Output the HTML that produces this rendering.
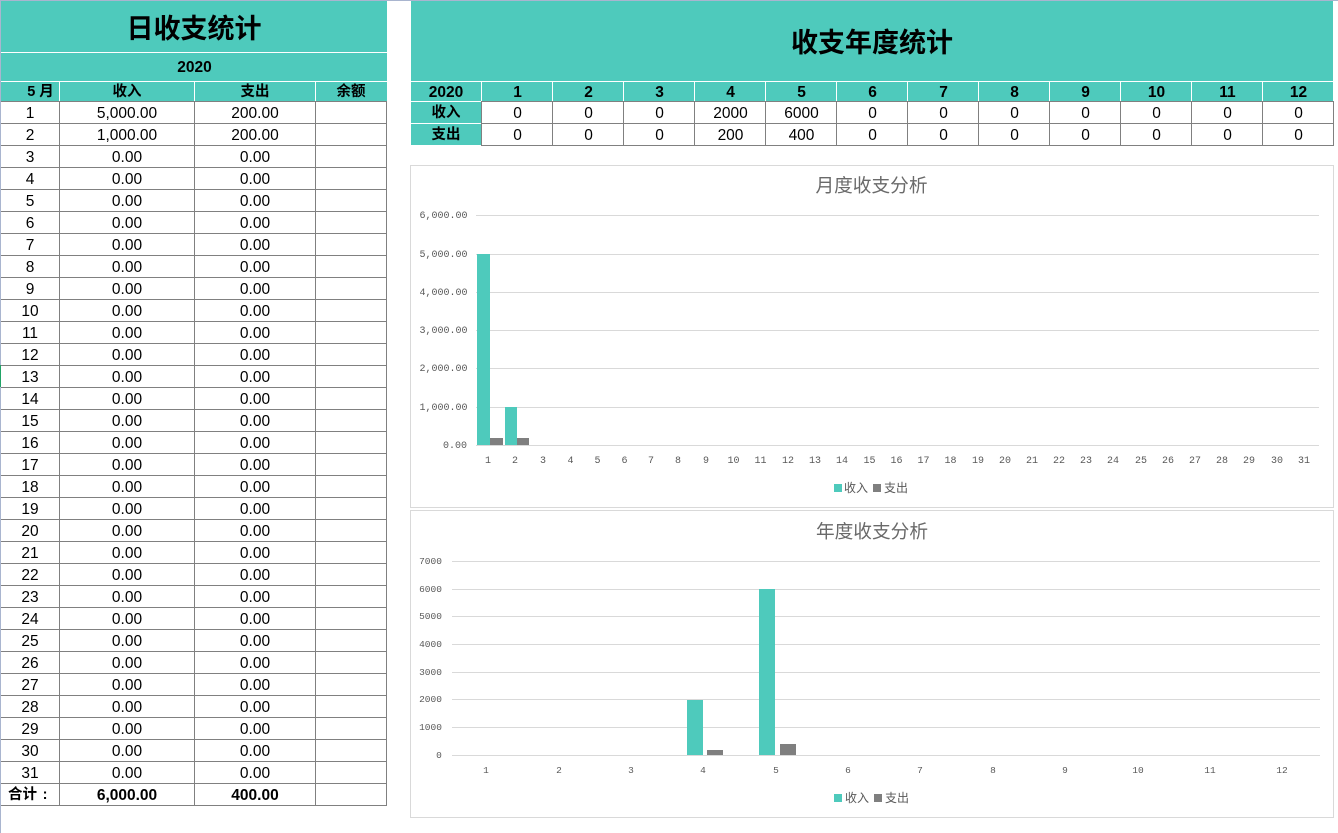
<!DOCTYPE html>
<html lang="zh"><head><meta charset="utf-8"><title>收支统计</title>
<style>
html,body{margin:0;padding:0;background:#fff;width:1338px;height:833px;overflow:hidden}
svg{display:block}
text{font-family:"Liberation Sans","Noto Sans CJK SC",sans-serif;font-size:15.5px;fill:#000;text-anchor:middle}
.cj{font-family:"Liberation Sans","Noto Sans CJK SC",sans-serif;font-size:14.5px}
.b{font-weight:bold}
.ax text{font-family:"Liberation Mono",monospace;font-size:10px;fill:#595959}
.ax2 text{font-size:9.5px}
.lg text{font-family:"Liberation Sans","WenQuanYi Zen Hei","Noto Sans CJK SC",sans-serif;font-size:12px;fill:#595959;text-anchor:start}
.tt{font-family:"Liberation Sans","WenQuanYi Zen Hei","Noto Sans CJK SC",sans-serif;font-size:18.7px;fill:#6a6a6a}
</style></head><body>
<svg width="1338" height="833" viewBox="0 0 1338 833" xmlns="http://www.w3.org/2000/svg" shape-rendering="crispEdges">
<rect width="1338" height="833" fill="#fff"/>
<rect x="0" y="0" width="1338" height="1" fill="#a9b5cf"/>
<rect x="0" y="0" width="1" height="833" fill="#a9b5cf"/>
<rect x="0" y="365" width="1" height="22" fill="#21a366"/>

<!-- left table -->
<rect x="1" y="1" width="386" height="100" fill="#4ecabc"/>
<rect x="1" y="52" width="386" height="1" fill="#fff"/>
<rect x="1" y="81" width="386" height="1" fill="#fff"/>
<rect x="59" y="81" width="1" height="20" fill="#fff"/>
<rect x="194" y="81" width="1" height="20" fill="#fff"/>
<rect x="315" y="81" width="1" height="20" fill="#fff"/>
<g fill="#808080">
<rect x="1" y="101" width="386" height="1"/><rect x="1" y="123" width="386" height="1"/><rect x="1" y="145" width="386" height="1"/><rect x="1" y="167" width="386" height="1"/><rect x="1" y="189" width="386" height="1"/><rect x="1" y="211" width="386" height="1"/><rect x="1" y="233" width="386" height="1"/><rect x="1" y="255" width="386" height="1"/><rect x="1" y="277" width="386" height="1"/><rect x="1" y="299" width="386" height="1"/><rect x="1" y="321" width="386" height="1"/><rect x="1" y="343" width="386" height="1"/><rect x="1" y="365" width="386" height="1"/><rect x="1" y="387" width="386" height="1"/><rect x="1" y="409" width="386" height="1"/><rect x="1" y="431" width="386" height="1"/><rect x="1" y="453" width="386" height="1"/><rect x="1" y="475" width="386" height="1"/><rect x="1" y="497" width="386" height="1"/><rect x="1" y="519" width="386" height="1"/><rect x="1" y="541" width="386" height="1"/><rect x="1" y="563" width="386" height="1"/><rect x="1" y="585" width="386" height="1"/><rect x="1" y="607" width="386" height="1"/><rect x="1" y="629" width="386" height="1"/><rect x="1" y="651" width="386" height="1"/><rect x="1" y="673" width="386" height="1"/><rect x="1" y="695" width="386" height="1"/><rect x="1" y="717" width="386" height="1"/><rect x="1" y="739" width="386" height="1"/><rect x="1" y="761" width="386" height="1"/><rect x="1" y="783" width="386" height="1"/><rect x="1" y="805" width="386" height="1"/>
<rect x="59" y="101" width="1" height="704"/><rect x="194" y="101" width="1" height="704"/><rect x="315" y="101" width="1" height="704"/><rect x="386" y="101" width="1" height="705"/>
</g>
<g shape-rendering="auto">
<text x="194" y="38" class="cj b" style="font-size:27px">日收支统计</text>
<text x="194.500" y="72" class="b">2020</text>
<text class="cj b" y="96"><tspan x="40.500">5 月</tspan><tspan x="127">收入</tspan><tspan x="255">支出</tspan><tspan x="351">余额</tspan></text>
<g transform="translate(0,1)">
<text y="117"><tspan x="30">1</tspan><tspan x="127">5,000.00</tspan><tspan x="255">200.00</tspan></text>
<text y="139"><tspan x="30">2</tspan><tspan x="127">1,000.00</tspan><tspan x="255">200.00</tspan></text>
<text y="161"><tspan x="30">3</tspan><tspan x="127">0.00</tspan><tspan x="255">0.00</tspan></text>
<text y="183"><tspan x="30">4</tspan><tspan x="127">0.00</tspan><tspan x="255">0.00</tspan></text>
<text y="205"><tspan x="30">5</tspan><tspan x="127">0.00</tspan><tspan x="255">0.00</tspan></text>
<text y="227"><tspan x="30">6</tspan><tspan x="127">0.00</tspan><tspan x="255">0.00</tspan></text>
<text y="249"><tspan x="30">7</tspan><tspan x="127">0.00</tspan><tspan x="255">0.00</tspan></text>
<text y="271"><tspan x="30">8</tspan><tspan x="127">0.00</tspan><tspan x="255">0.00</tspan></text>
<text y="293"><tspan x="30">9</tspan><tspan x="127">0.00</tspan><tspan x="255">0.00</tspan></text>
<text y="315"><tspan x="30">10</tspan><tspan x="127">0.00</tspan><tspan x="255">0.00</tspan></text>
<text y="337"><tspan x="30">11</tspan><tspan x="127">0.00</tspan><tspan x="255">0.00</tspan></text>
<text y="359"><tspan x="30">12</tspan><tspan x="127">0.00</tspan><tspan x="255">0.00</tspan></text>
<text y="381"><tspan x="30">13</tspan><tspan x="127">0.00</tspan><tspan x="255">0.00</tspan></text>
<text y="403"><tspan x="30">14</tspan><tspan x="127">0.00</tspan><tspan x="255">0.00</tspan></text>
<text y="425"><tspan x="30">15</tspan><tspan x="127">0.00</tspan><tspan x="255">0.00</tspan></text>
<text y="447"><tspan x="30">16</tspan><tspan x="127">0.00</tspan><tspan x="255">0.00</tspan></text>
<text y="469"><tspan x="30">17</tspan><tspan x="127">0.00</tspan><tspan x="255">0.00</tspan></text>
<text y="491"><tspan x="30">18</tspan><tspan x="127">0.00</tspan><tspan x="255">0.00</tspan></text>
<text y="513"><tspan x="30">19</tspan><tspan x="127">0.00</tspan><tspan x="255">0.00</tspan></text>
<text y="535"><tspan x="30">20</tspan><tspan x="127">0.00</tspan><tspan x="255">0.00</tspan></text>
<text y="557"><tspan x="30">21</tspan><tspan x="127">0.00</tspan><tspan x="255">0.00</tspan></text>
<text y="579"><tspan x="30">22</tspan><tspan x="127">0.00</tspan><tspan x="255">0.00</tspan></text>
<text y="601"><tspan x="30">23</tspan><tspan x="127">0.00</tspan><tspan x="255">0.00</tspan></text>
<text y="623"><tspan x="30">24</tspan><tspan x="127">0.00</tspan><tspan x="255">0.00</tspan></text>
<text y="645"><tspan x="30">25</tspan><tspan x="127">0.00</tspan><tspan x="255">0.00</tspan></text>
<text y="667"><tspan x="30">26</tspan><tspan x="127">0.00</tspan><tspan x="255">0.00</tspan></text>
<text y="689"><tspan x="30">27</tspan><tspan x="127">0.00</tspan><tspan x="255">0.00</tspan></text>
<text y="711"><tspan x="30">28</tspan><tspan x="127">0.00</tspan><tspan x="255">0.00</tspan></text>
<text y="733"><tspan x="30">29</tspan><tspan x="127">0.00</tspan><tspan x="255">0.00</tspan></text>
<text y="755"><tspan x="30">30</tspan><tspan x="127">0.00</tspan><tspan x="255">0.00</tspan></text>
<text y="777"><tspan x="30">31</tspan><tspan x="127">0.00</tspan><tspan x="255">0.00</tspan></text>
<text class="b" y="799"><tspan x="127">6,000.00</tspan><tspan x="255">400.00</tspan></text>
</g>
<text class="cj b" y="799"><tspan x="22.500">合计</tspan><tspan x="45">:</tspan></text>
</g>

<!-- right table -->
<rect x="411" y="1" width="922" height="100" fill="#4ecabc"/>
<rect x="411" y="101" width="70" height="44" fill="#4ecabc"/>
<rect x="411" y="81" width="922" height="1" fill="#fff"/>
<rect x="411" y="101" width="70" height="1" fill="#fff"/>
<rect x="411" y="123" width="70" height="1" fill="#fff"/>
<g fill="#fff">
<rect x="481" y="81" width="1" height="20"/><rect x="552" y="81" width="1" height="20"/><rect x="623" y="81" width="1" height="20"/><rect x="694" y="81" width="1" height="20"/><rect x="765" y="81" width="1" height="20"/><rect x="836" y="81" width="1" height="20"/><rect x="907" y="81" width="1" height="20"/><rect x="978" y="81" width="1" height="20"/><rect x="1049" y="81" width="1" height="20"/><rect x="1120" y="81" width="1" height="20"/><rect x="1191" y="81" width="1" height="20"/><rect x="1262" y="81" width="1" height="20"/>
</g>
<g fill="#808080">
<rect x="481" y="101" width="853" height="1"/><rect x="481" y="123" width="853" height="1"/><rect x="481" y="145" width="853" height="1"/>
<rect x="481" y="101" width="1" height="44"/><rect x="552" y="101" width="1" height="44"/><rect x="623" y="101" width="1" height="44"/><rect x="694" y="101" width="1" height="44"/><rect x="765" y="101" width="1" height="44"/><rect x="836" y="101" width="1" height="44"/><rect x="907" y="101" width="1" height="44"/><rect x="978" y="101" width="1" height="44"/><rect x="1049" y="101" width="1" height="44"/><rect x="1120" y="101" width="1" height="44"/><rect x="1191" y="101" width="1" height="44"/><rect x="1262" y="101" width="1" height="44"/><rect x="1333" y="101" width="1" height="45"/>
</g>
<g shape-rendering="auto">
<text x="872" y="52" class="cj b" style="font-size:27px">收支年度统计</text>
<g transform="translate(0,1)">
<text class="b" y="96"><tspan x="446">2020</tspan><tspan x="517.500">1</tspan><tspan x="588.500">2</tspan><tspan x="659.500">3</tspan><tspan x="730.500">4</tspan><tspan x="801.500">5</tspan><tspan x="872.500">6</tspan><tspan x="943.500">7</tspan><tspan x="1014.500">8</tspan><tspan x="1085.500">9</tspan><tspan x="1156.500">10</tspan><tspan x="1227.500">11</tspan><tspan x="1298.500">12</tspan></text>
<text y="117"><tspan x="517.500">0</tspan><tspan x="588.500">0</tspan><tspan x="659.500">0</tspan><tspan x="730.500">2000</tspan><tspan x="801.500">6000</tspan><tspan x="872.500">0</tspan><tspan x="943.500">0</tspan><tspan x="1014.500">0</tspan><tspan x="1085.500">0</tspan><tspan x="1156.500">0</tspan><tspan x="1227.500">0</tspan><tspan x="1298.500">0</tspan></text>
<text y="139"><tspan x="517.500">0</tspan><tspan x="588.500">0</tspan><tspan x="659.500">0</tspan><tspan x="730.500">200</tspan><tspan x="801.500">400</tspan><tspan x="872.500">0</tspan><tspan x="943.500">0</tspan><tspan x="1014.500">0</tspan><tspan x="1085.500">0</tspan><tspan x="1156.500">0</tspan><tspan x="1227.500">0</tspan><tspan x="1298.500">0</tspan></text>
</g>
<text class="cj b" x="446" y="117">收入</text>
<text class="cj b" x="446" y="139">支出</text>
</g>

<!-- chart 1 -->
<rect x="410.500" y="165.500" width="923" height="342" fill="#fff" stroke="#d9d9d9"/>
<g fill="#d9d9d9">
<rect x="476" y="215" width="843" height="1"/><rect x="476" y="254" width="843" height="1"/><rect x="476" y="292" width="843" height="1"/><rect x="476" y="330" width="843" height="1"/><rect x="476" y="368" width="843" height="1"/><rect x="476" y="407" width="843" height="1"/><rect x="476" y="445" width="843" height="1"/>
</g>
<rect x="477" y="254" width="13" height="191" fill="#4ecabc"/>
<rect x="490" y="438" width="13" height="7" fill="#7f7f7f"/>
<rect x="505" y="407" width="12" height="38" fill="#4ecabc"/>
<rect x="517" y="438" width="12" height="7" fill="#7f7f7f"/>
<g shape-rendering="auto">
<text x="871.500" y="192" class="tt">月度收支分析</text>
<g class="ax" transform="translate(0,-1)">
<text x="443.500" y="219">6,000.00</text><text x="443.500" y="258">5,000.00</text><text x="443.500" y="296">4,000.00</text><text x="443.500" y="334">3,000.00</text><text x="443.500" y="372">2,000.00</text><text x="443.500" y="411">1,000.00</text><text x="455" y="449">0.00</text>
<text y="464"><tspan x="488">1</tspan><tspan x="515">2</tspan><tspan x="543">3</tspan><tspan x="570.500">4</tspan><tspan x="597.500">5</tspan><tspan x="624.500">6</tspan><tspan x="651">7</tspan><tspan x="678">8</tspan><tspan x="706">9</tspan><tspan x="733.500">10</tspan><tspan x="760.500">11</tspan><tspan x="788">12</tspan><tspan x="815">13</tspan><tspan x="842">14</tspan><tspan x="869.500">15</tspan><tspan x="896.500">16</tspan><tspan x="923.500">17</tspan><tspan x="950.500">18</tspan><tspan x="978">19</tspan><tspan x="1005">20</tspan><tspan x="1032">21</tspan><tspan x="1059">22</tspan><tspan x="1086">23</tspan><tspan x="1113">24</tspan><tspan x="1141">25</tspan><tspan x="1168">26</tspan><tspan x="1195">27</tspan><tspan x="1222">28</tspan><tspan x="1249">29</tspan><tspan x="1277">30</tspan><tspan x="1304">31</tspan></text>
</g>
<g class="lg" transform="translate(0,-1)"><text x="844" y="493">收入</text><text x="884" y="493">支出</text></g>
</g>
<rect x="834" y="484" width="8" height="8" fill="#4ecabc"/>
<rect x="873" y="484" width="8" height="8" fill="#7f7f7f"/>

<!-- chart 2 -->
<rect x="410.500" y="510.500" width="923" height="307" fill="#fff" stroke="#d9d9d9"/>
<g fill="#d9d9d9">
<rect x="452" y="561" width="868" height="1"/><rect x="452" y="589" width="868" height="1"/><rect x="452" y="616" width="868" height="1"/><rect x="452" y="644" width="868" height="1"/><rect x="452" y="672" width="868" height="1"/><rect x="452" y="699" width="868" height="1"/><rect x="452" y="727" width="868" height="1"/><rect x="452" y="755" width="868" height="1"/>
</g>
<rect x="687" y="700" width="16" height="55" fill="#4ecabc"/>
<rect x="707" y="750" width="16" height="5" fill="#7f7f7f"/>
<rect x="759" y="589" width="16" height="166" fill="#4ecabc"/>
<rect x="780" y="744" width="16" height="11" fill="#7f7f7f"/>
<g shape-rendering="auto">
<text x="872" y="538" class="tt">年度收支分析</text>
<g class="ax ax2" transform="translate(0,-1)">
<text x="430.500" y="565">7000</text><text x="430.500" y="593">6000</text><text x="430.500" y="620">5000</text><text x="430.500" y="648">4000</text><text x="430.500" y="676">3000</text><text x="430.500" y="703">2000</text><text x="430.500" y="731">1000</text><text x="439" y="759">0</text>
<text y="774"><tspan x="486">1</tspan><tspan x="559">2</tspan><tspan x="631">3</tspan><tspan x="703">4</tspan><tspan x="776">5</tspan><tspan x="848">6</tspan><tspan x="920">7</tspan><tspan x="993">8</tspan><tspan x="1065">9</tspan><tspan x="1138">10</tspan><tspan x="1210">11</tspan><tspan x="1282">12</tspan></text>
</g>
<g class="lg" transform="translate(0,-1)"><text x="845" y="803">收入</text><text x="885" y="803">支出</text></g>
</g>
<rect x="834" y="794" width="8" height="8" fill="#4ecabc"/>
<rect x="874" y="794" width="8" height="8" fill="#7f7f7f"/>
</svg>
</body></html>
